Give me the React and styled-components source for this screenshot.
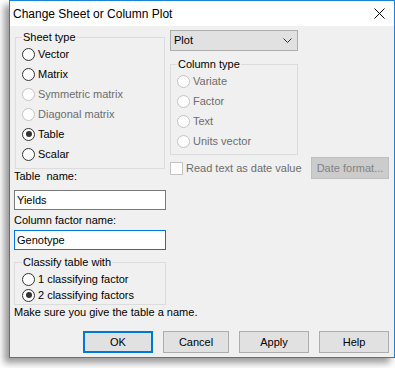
import styled, { createGlobalStyle } from "styled-components";

const GlobalStyle = createGlobalStyle`
  body {
    margin: 0;
    background: #ffffff;
    font-family: "Liberation Sans", Arial, sans-serif;
  }
`;

const Page = styled.div`
  box-sizing: border-box;
  width: 395px;
  height: 368px;
  padding-left: 9px;
`;

const Window = styled.div`
  box-sizing: border-box;
  width: 386px;
  height: 358px;
  border: 1px solid #1883d7;
  background: #f0f0f0;
  box-shadow: -5px 5px 7px rgba(0, 0, 0, 0.4);
  display: flex;
  flex-direction: column;
`;

const TitleBar = styled.div`
  height: 25px;
  flex: none;
  background: #ffffff;
  display: flex;
  align-items: center;
  justify-content: space-between;
  padding: 0 9px 0 3px;
  font-size: 12px;
  color: #000;
`;

const Body = styled.div`
  flex: 1;
  display: flex;
  flex-direction: column;
  padding: 4px 5px 4px 4px;
  font-size: 11px;
  line-height: 13px;
  color: #000;
`;

const Top = styled.div`
  display: grid;
  grid-template-columns: 152px 1fr;
  column-gap: 4px;
`;

const Column = styled.div`
  display: flex;
  flex-direction: column;
  align-items: flex-start;
`;

const Group = styled.fieldset`
  box-sizing: border-box;
  width: ${({ $width }) => $width};
  margin: ${({ $margin }) => $margin || 0};
  padding: ${({ $pad }) => $pad};
  border: 1px solid #dcdcdc;
  min-width: 0;
  display: flex;
  flex-direction: column;
`;

const Legend = styled.legend`
  padding: 0 1px;
  font-size: 11px;
  line-height: 14px;
  color: #000;
`;

const Row = styled.label`
  height: ${({ $h }) => $h}px;
  display: flex;
  align-items: center;
  gap: 3px;
  white-space: nowrap;
  color: ${({ $disabled }) => ($disabled ? "#6d6d6d" : "#000")};
`;

const RadioDot = styled.span`
  position: relative;
  box-sizing: border-box;
  width: 13px;
  height: 13px;
  flex: none;
  border-radius: 50%;
  background: #ffffff;
  border: 1px solid ${({ $disabled }) => ($disabled ? "#c4c4c4" : "#333333")};

  ${({ $checked }) =>
    $checked
      ? `
        &::after {
          content: "";
          position: absolute;
          left: 2.5px;
          top: 2.5px;
          width: 6px;
          height: 6px;
          border-radius: 50%;
          background: #333333;
        }
      `
      : ""}
`;

const CheckBox = styled.span`
  box-sizing: border-box;
  width: 13px;
  height: 13px;
  flex: none;
  background: #ffffff;
  border: 1px solid #c4c4c4;
`;

const FieldLabel = styled.div`
  margin-top: ${({ $mt }) => $mt}px;
`;

const TextBox = styled.input`
  box-sizing: border-box;
  width: 152px;
  height: 20px;
  margin: ${({ $mt }) => $mt}px 0 0;
  padding: 0 2px;
  border: 1px solid ${({ $focused }) => ($focused ? "#0078d7" : "#7a7a7a")};
  background: #ffffff;
  font-family: "Liberation Sans", Arial, sans-serif;
  font-size: 11px;
  color: #000;
  outline: none;
`;

const Select = styled.div`
  box-sizing: border-box;
  width: 128px;
  height: 21px;
  padding: 0 5px 0 3px;
  border: 1px solid #adadad;
  background: #e1e1e1;
  display: flex;
  align-items: center;
  justify-content: space-between;
`;

const CheckRow = styled.div`
  width: 100%;
  margin-top: 2px;
  display: flex;
  align-items: center;
  justify-content: space-between;
`;

const Button = styled.button`
  box-sizing: border-box;
  width: ${({ $w }) => $w || 70}px;
  height: 22px;
  padding: 0;
  font-family: "Liberation Sans", Arial, sans-serif;
  font-size: 11px;
  color: ${({ disabled }) => (disabled ? "#838383" : "#000")};
  background: ${({ disabled }) => (disabled ? "#cccccc" : "#e1e1e1")};
  border: ${({ $default, disabled }) =>
    $default ? "2px solid #0078d7" : `1px solid ${disabled ? "#bfbfbf" : "#adadad"}`};
`;

const Message = styled.div`
  margin-top: 1px;
  white-space: nowrap;
`;

const Buttons = styled.div`
  margin-top: auto;
  display: flex;
  justify-content: flex-end;
  gap: 10px;
`;

function Radio({ label, checked, disabled, h = 20 }) {
  return (
    <Row $h={h} $disabled={disabled}>
      <RadioDot $checked={checked} $disabled={disabled} />
      {label}
    </Row>
  );
}

const sheetTypes = [
  { label: "Vector" },
  { label: "Matrix" },
  { label: "Symmetric matrix", disabled: true },
  { label: "Diagonal matrix", disabled: true },
  { label: "Table", checked: true },
  { label: "Scalar" },
];

const columnTypes = ["Variate", "Factor", "Text", "Units vector"];

export default function App() {
  return (
    <Page>
      <GlobalStyle />
      <Window>
        <TitleBar>
          <span>Change Sheet or Column Plot</span>
          <svg width="11" height="11" viewBox="0 0 11 11">
            <path d="M0.5 0.5L10.5 10.5M10.5 0.5L0.5 10.5" stroke="#000" strokeWidth="1" />
          </svg>
        </TitleBar>

        <Body>
          <Top>
            <Column>
              <Group $width="150px" $margin="0 1px" $pad="0 0 4px 6px">
                <Legend>Sheet type</Legend>
                {sheetTypes.map((t) => (
                  <Radio key={t.label} {...t} />
                ))}
              </Group>

              <FieldLabel $mt={1}>Table&nbsp; name:</FieldLabel>
              <TextBox $mt={7} defaultValue="Yields" />
              <FieldLabel $mt={4}>Column factor name:</FieldLabel>
              <TextBox $mt={3} $focused defaultValue="Genotype" />

              <Group $width="152px" $margin="5px 0 0" $pad="2px 0 1px 7px">
                <Legend>Classify table with</Legend>
                <Radio h={16} label="1 classifying factor" />
                <Radio h={16} label="2 classifying factors" checked />
              </Group>
              <Message>Make sure you give the table a name.</Message>
            </Column>

            <Column>
              <Select>
                <span>Plot</span>
                <svg width="9" height="5" viewBox="0 0 9 5">
                  <path d="M0.5 0.5L4.5 4.5L8.5 0.5" fill="none" stroke="#333" strokeWidth="1" />
                </svg>
              </Select>

              <Group $width="128px" $margin="6px 0 0" $pad="0 0 3px 6px">
                <Legend>Column type</Legend>
                {columnTypes.map((label) => (
                  <Radio key={label} label={label} disabled />
                ))}
              </Group>

              <CheckRow>
                <Row $h={22} $disabled>
                  <CheckBox />
                  Read text as date value
                </Row>
                <Button $w={78} disabled>
                  Date format...
                </Button>
              </CheckRow>
            </Column>
          </Top>

          <Buttons>
            <Button $default>OK</Button>
            <Button $w={66}>Cancel</Button>
            <Button>Apply</Button>
            <Button>Help</Button>
          </Buttons>
        </Body>
      </Window>
    </Page>
  );
}
